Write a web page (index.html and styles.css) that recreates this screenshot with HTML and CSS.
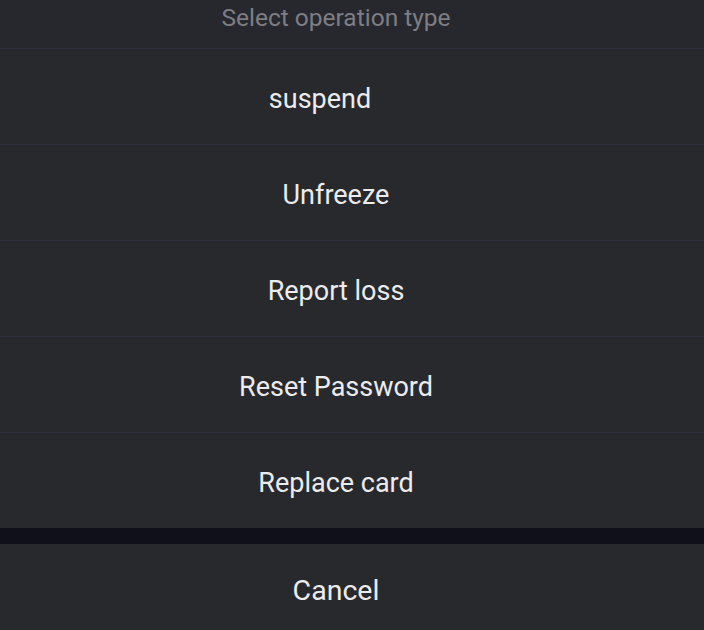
FILE: index.html
```html
<!DOCTYPE html>
<html>
<head>
<meta charset="utf-8">
<link rel="stylesheet" href="styles.css">
</head>
<body>
<div class="sheet">
  <div class="group">
    <div class="title">Select operation type</div>
    <div class="option option--shift">suspend</div>
    <div class="option">Unfreeze</div>
    <div class="option">Report loss</div>
    <div class="option">Reset Password</div>
    <div class="option">Replace card</div>
  </div>
  <div class="cancel">Cancel</div>
</div>
</body>
</html>
```
FILE: styles.css
```css
html, body {
  margin: 0;
  padding: 0;
  background: #28292d;
}
body {
  width: 704px;
  height: 630px;
  overflow: hidden;
  font-family: Roboto, Inter, "Noto Sans", sans-serif;
}
.sheet {
  display: flex;
  flex-direction: column;
  background: #0f1019;
  gap: 16px;
}
.group {
  display: flex;
  flex-direction: column;
  background: #2e2f3b;
  gap: 1px;
}
.title {
  height: 48px;
  background: #27282d;
  color: #7d7e83;
  font-size: 24.5px;
  display: flex;
  align-items: flex-start;
  justify-content: center;
  padding: 3px 32px 0 0;
  box-sizing: border-box;
}
.option {
  height: 95px;
  background: #28292d;
  color: #ececee;
  font-size: 27px;
  display: flex;
  align-items: center;
  justify-content: center;
  padding: 4px 32px 0 0;
  box-sizing: border-box;
}
.option--shift {
  padding-right: 64px;
}
.cancel {
  height: 110px;
  background: #28292d;
  color: #ececee;
  font-size: 28.5px;
  display: flex;
  align-items: flex-start;
  justify-content: center;
  padding: 30px 32px 0 0;
  box-sizing: border-box;
}
```
